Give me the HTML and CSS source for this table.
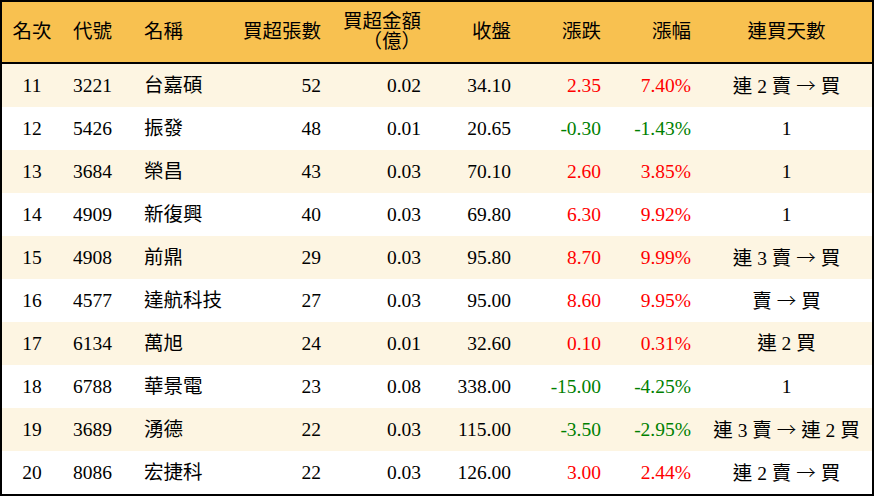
FILE: index.html
```html
<!DOCTYPE html>
<html lang="zh-Hant">
<head>
<meta charset="utf-8">
<title>買超排行</title>
<link rel="stylesheet" href="styles.css">
</head>
<body>
<div class="frame">
<table class="rank">
<colgroup>
<col class="c-rank"><col class="c-code"><col class="c-name"><col class="c-vol"><col class="c-amt"><col class="c-close"><col class="c-chg"><col class="c-pct"><col class="c-days">
</colgroup>
<thead>
<tr>
<th class="ctr">名次</th>
<th class="lft code">代號</th>
<th class="lft name">名稱</th>
<th class="rgt">買超張數</th>
<th class="rgt two">買超金額<br>（億）</th>
<th class="rgt">收盤</th>
<th class="rgt">漲跌</th>
<th class="rgt">漲幅</th>
<th class="ctr">連買天數</th>
</tr>
</thead>
<tbody>
<tr class="alt"><td class="ctr">11</td><td class="lft code">3221</td><td class="lft name">台嘉碩</td><td class="rgt">52</td><td class="rgt">0.02</td><td class="rgt">34.10</td><td class="rgt up">2.35</td><td class="rgt up">7.40%</td><td class="ctr">連 2 賣 <span class="arr">→</span> 買</td></tr>
<tr><td class="ctr">12</td><td class="lft code">5426</td><td class="lft name">振發</td><td class="rgt">48</td><td class="rgt">0.01</td><td class="rgt">20.65</td><td class="rgt down">-0.30</td><td class="rgt down">-1.43%</td><td class="ctr">1</td></tr>
<tr class="alt"><td class="ctr">13</td><td class="lft code">3684</td><td class="lft name">榮昌</td><td class="rgt">43</td><td class="rgt">0.03</td><td class="rgt">70.10</td><td class="rgt up">2.60</td><td class="rgt up">3.85%</td><td class="ctr">1</td></tr>
<tr><td class="ctr">14</td><td class="lft code">4909</td><td class="lft name">新復興</td><td class="rgt">40</td><td class="rgt">0.03</td><td class="rgt">69.80</td><td class="rgt up">6.30</td><td class="rgt up">9.92%</td><td class="ctr">1</td></tr>
<tr class="alt"><td class="ctr">15</td><td class="lft code">4908</td><td class="lft name">前鼎</td><td class="rgt">29</td><td class="rgt">0.03</td><td class="rgt">95.80</td><td class="rgt up">8.70</td><td class="rgt up">9.99%</td><td class="ctr">連 3 賣 <span class="arr">→</span> 買</td></tr>
<tr><td class="ctr">16</td><td class="lft code">4577</td><td class="lft name">達航科技</td><td class="rgt">27</td><td class="rgt">0.03</td><td class="rgt">95.00</td><td class="rgt up">8.60</td><td class="rgt up">9.95%</td><td class="ctr">賣 <span class="arr">→</span> 買</td></tr>
<tr class="alt"><td class="ctr">17</td><td class="lft code">6134</td><td class="lft name">萬旭</td><td class="rgt">24</td><td class="rgt">0.01</td><td class="rgt">32.60</td><td class="rgt up">0.10</td><td class="rgt up">0.31%</td><td class="ctr">連 2 買</td></tr>
<tr><td class="ctr">18</td><td class="lft code">6788</td><td class="lft name">華景電</td><td class="rgt">23</td><td class="rgt">0.08</td><td class="rgt">338.00</td><td class="rgt down">-15.00</td><td class="rgt down">-4.25%</td><td class="ctr">1</td></tr>
<tr class="alt"><td class="ctr">19</td><td class="lft code">3689</td><td class="lft name">湧德</td><td class="rgt">22</td><td class="rgt">0.03</td><td class="rgt">115.00</td><td class="rgt down">-3.50</td><td class="rgt down">-2.95%</td><td class="ctr">連 3 賣 <span class="arr">→</span> 連 2 買</td></tr>
<tr><td class="ctr">20</td><td class="lft code">8086</td><td class="lft name">宏捷科</td><td class="rgt">22</td><td class="rgt">0.03</td><td class="rgt">126.00</td><td class="rgt up">3.00</td><td class="rgt up">2.44%</td><td class="ctr">連 2 賣 <span class="arr">→</span> 買</td></tr>
</tbody>
</table>
</div>
</body>
</html>
```

FILE: styles.css
```css
html, body {
  margin: 0;
  padding: 0;
  background: #ffffff;
}

.frame {
  width: 874px;
  height: 496px;
  box-sizing: border-box;
  border: 2px solid #000000;
  background: #ffffff;
}

.rank {
  width: 870px;
  border-collapse: collapse;
  table-layout: fixed;
  font-family: "Liberation Serif", "Noto Sans CJK TC", serif;
  font-size: 19.5px;
  color: #000000;
}

.c-rank { width: 60px; }
.c-code { width: 73px; }
.c-name { width: 90px; }
.c-vol { width: 106px; }
.c-amt { width: 100px; }
.c-close { width: 90px; }
.c-chg { width: 90px; }
.c-pct { width: 90px; }
.c-days { width: 171px; }

.rank th {
  height: 60px;
  padding: 0;
  background: #f8c150;
  border-bottom: 2px solid #000000;
  font-weight: normal;
  line-height: 20px;
  white-space: nowrap;
}

.rank td {
  height: 43px;
  padding: 0;
  line-height: 22px;
  white-space: nowrap;
}

.rank tr.alt td {
  background: #fdf5e2;
}

.ctr { text-align: center; }
.lft { text-align: left; }
.rgt { text-align: right; padding-right: 10px !important; }

.code { padding-left: 11px !important; }
.name { padding-left: 9px !important; }

.arr {
  font-family: "Noto Sans CJK TC", "DejaVu Sans", sans-serif;
  font-weight: 300;
}

.up { color: #ff0000; }
.down { color: #008000; }
```
